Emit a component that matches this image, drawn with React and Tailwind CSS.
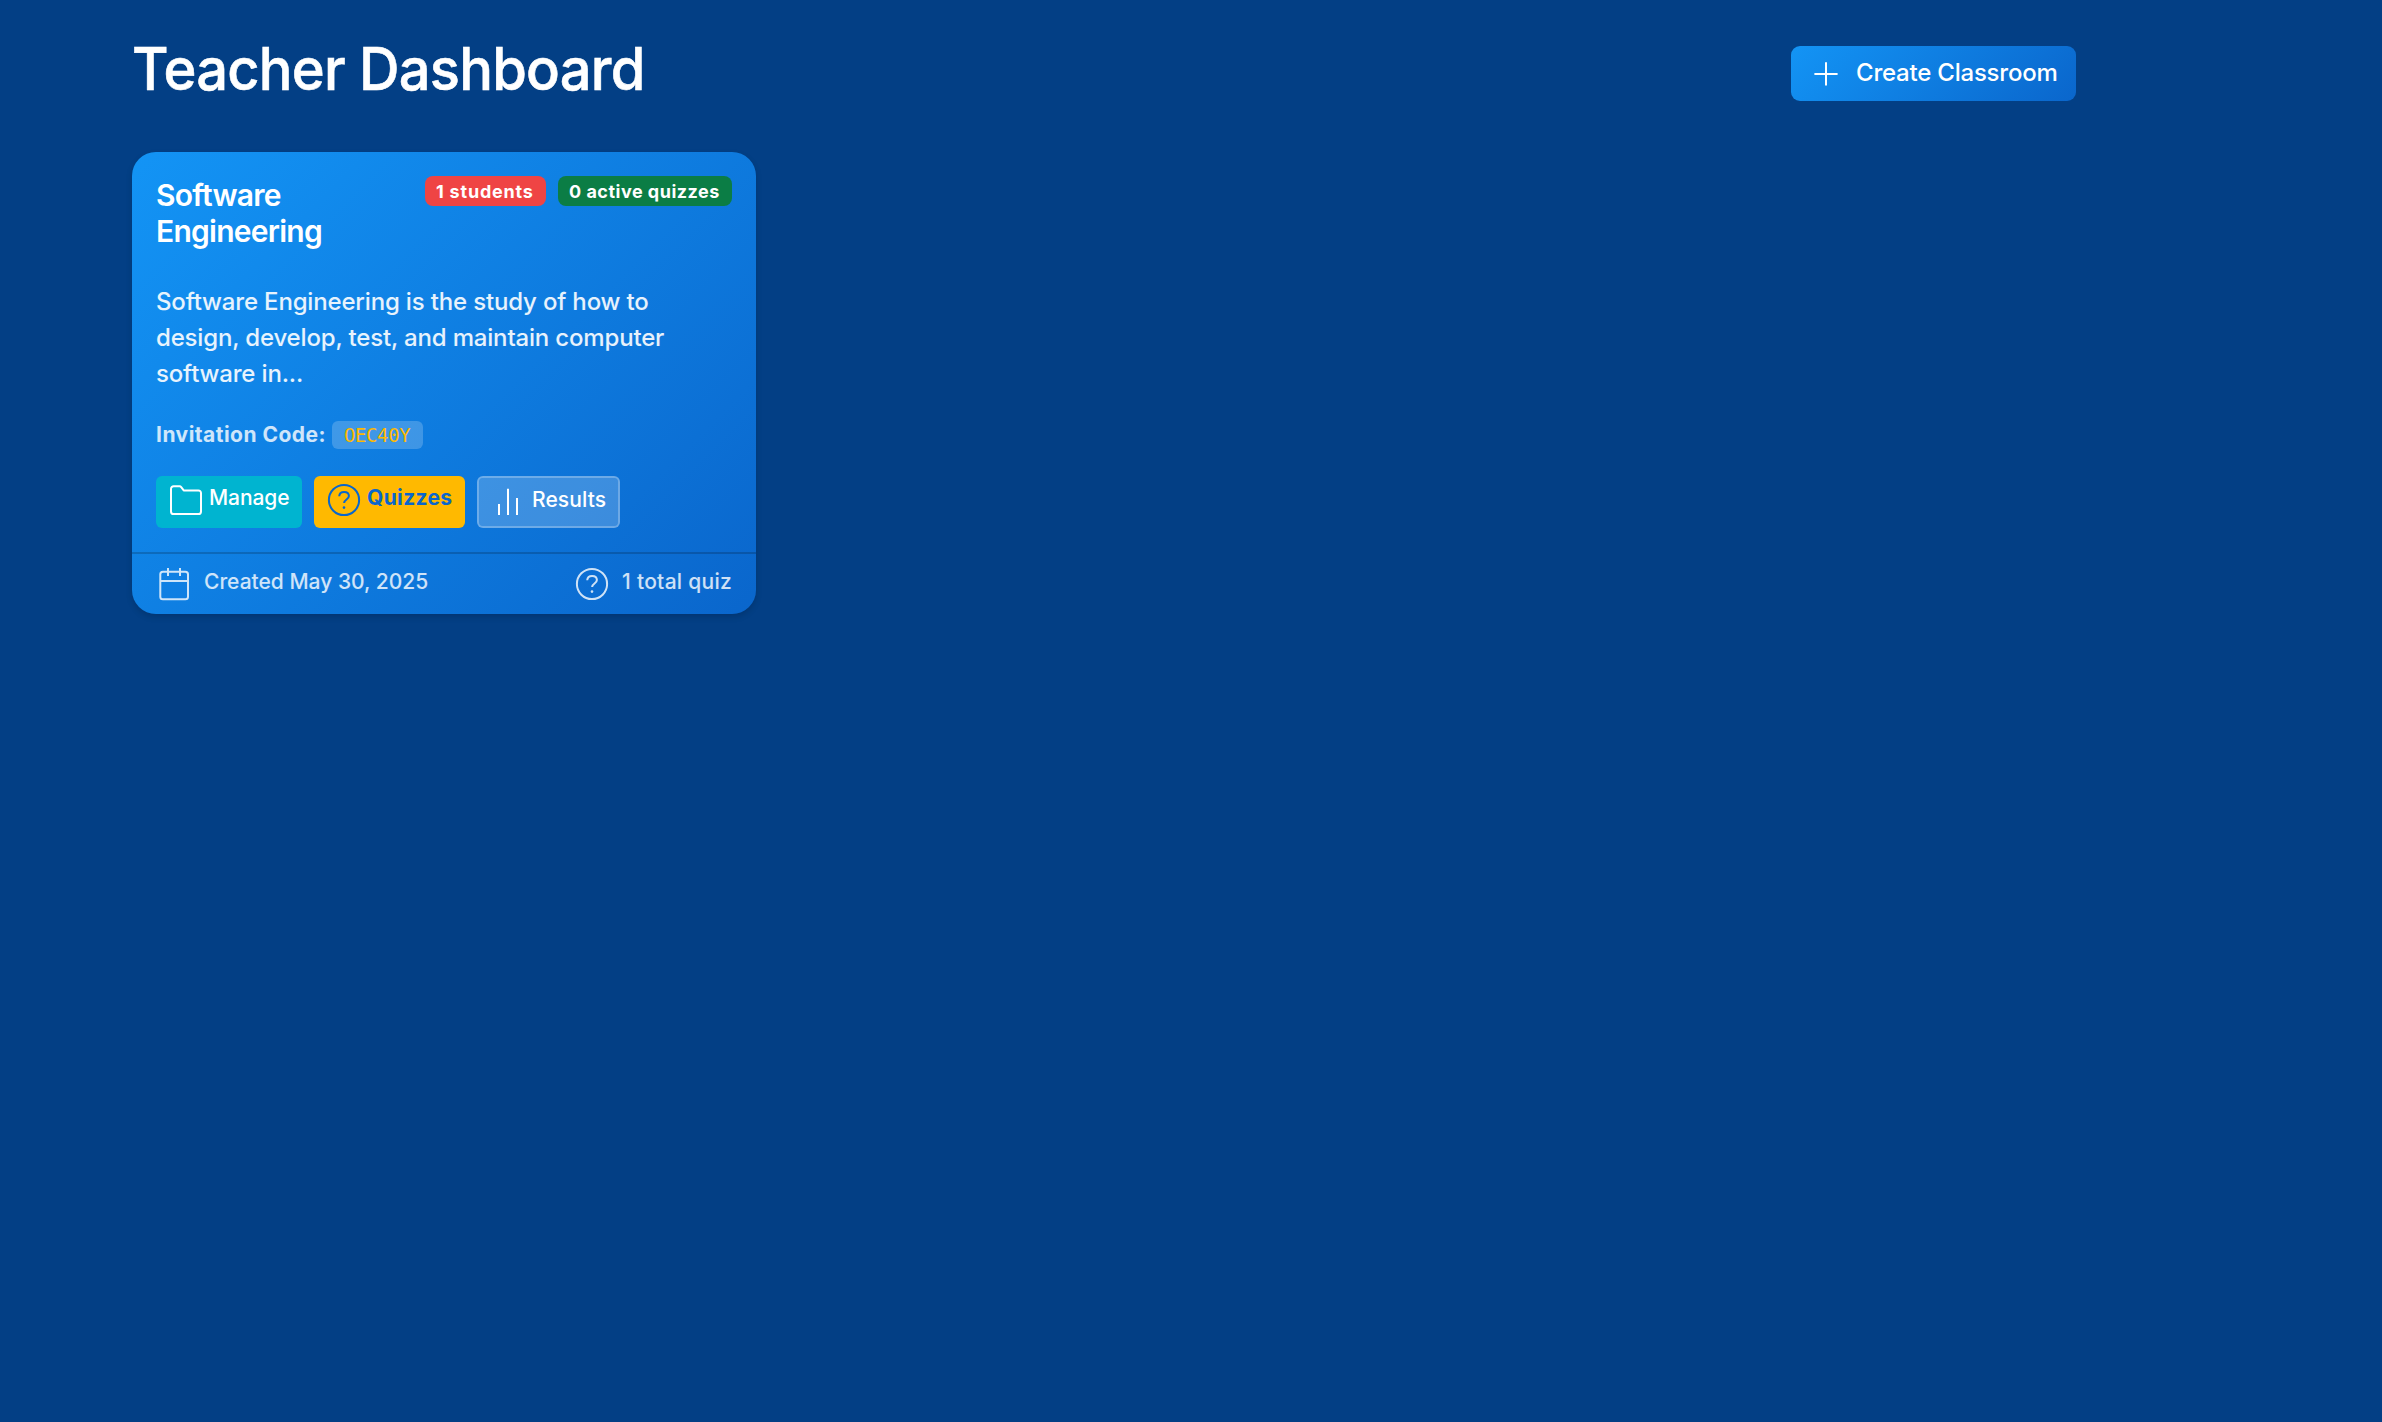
function Icon({ name, className = "" }) {
  return (
    <svg
      viewBox="0 0 36 36"
      fill="none"
      stroke="currentColor"
      strokeWidth="2"
      strokeLinejoin="round"
      className={"h-9 w-9 shrink-0 " + className}
    >
      {name === "plus" && <path d="M18 6.3v23.200M6.400 18h23.200" />}
      {name === "folder" && (
        <path d="M3 6.900a2.600 2.600 0 0 1 2.600-2.600h6c.6 0 1.200.3 1.600.8l2.500 3.300h14.700A2.600 2.600 0 0 1 33 11v18.400a2.600 2.600 0 0 1-2.600 2.600H5.600A2.600 2.600 0 0 1 3 29.400z" />
      )}
      {name === "help" && (
        <>
          <circle cx="18" cy="18" r="15.100" />
          <path d="M13.200 14.200c.2-2.700 2.200-4.300 4.900-4.300s4.800 1.600 4.800 4.200c0 3.600-4.800 3.300-4.800 7" />
          <circle cx="18" cy="25.600" r="1.300" fill="currentColor" stroke="none" />
        </>
      )}
      {name === "bars" && <path d="M9 31V20M18 31V4.700M27 31V14" />}
      {name === "calendar" && (
        <path d="M6.900 5.700h22.500A2.600 2.600 0 0 1 32 8.300v22.400a2.600 2.600 0 0 1-2.600 2.600H6.900a2.600 2.600 0 0 1-2.600-2.600V8.300a2.600 2.600 0 0 1 2.600-2.600zM4.300 15H32M12 2v8M24 2v8" />
      )}
    </svg>
  );
}

function ClassroomCard() {
  return (
    <article className="mt-[47px] h-[462px] w-[624px] overflow-hidden rounded-[24px] bg-[linear-gradient(135deg,#1394f5_0%,#0a66cc_100%)] shadow-[0_3px_6px_rgba(0,0,0,0.15)]">
      <div className="flex h-[400px] flex-col px-6 pt-6">
        <div className="flex justify-between">
          <h2 className="mt-px text-[30px] leading-9 font-semibold tracking-[-0.75px]">
            Software
            <br />
            Engineering
          </h2>
          <div className="flex gap-3 text-[18px] leading-[31px] font-bold whitespace-nowrap">
            <span className="h-[30px] w-[121px] rounded-[8px] bg-[#ef4444] pl-[11px] tracking-[0.8px]">1 students</span>
            <span className="h-[30px] w-[174px] rounded-[8px] bg-[#0b7d45] pl-[11px] tracking-[0.5px]">0 active quizzes</span>
          </div>
        </div>
        <p className="mt-[35px] text-[24px] leading-9 font-medium tracking-[-0.17px] whitespace-nowrap text-white/90">
          Software Engineering is the study of how to
          <br />
          design, develop, test, and maintain computer
          <br />
          software in...
        </p>
        <div className="mt-[26px] flex h-8 items-start text-[21px] leading-[33px] text-white/80">
          <strong className="w-[176px] font-bold tracking-[0.48px] whitespace-nowrap">Invitation Code:</strong>
          <code className="mt-[3px] h-7 w-[91px] rounded-[6px] bg-white/20 pl-3 font-['DejaVu_Sans_Mono',monospace] text-[19px] leading-[28px] tracking-[-0.4px] text-[#ffb900]">
            OEC40Y
          </code>
        </div>
        <div className="mt-[26px] flex h-[52px] gap-3 text-[21px] leading-8 font-medium">
          <button className="flex w-[146px] items-start gap-[5px] rounded-[6px] bg-[#00b4d0] px-3 pt-[6px]">
            <Icon name="folder" />
            <span className="tracking-[-0.1px]">Manage</span>
          </button>
          <button className="flex w-[151px] items-start gap-[5px] rounded-[6px] bg-[#ffb900] px-3 pt-[6px] font-bold text-[#0a66cc]">
            <Icon name="help" />
            <span className="tracking-[0.35px]">Quizzes</span>
          </button>
          <button className="flex w-[143px] items-start gap-[6px] rounded-[6px] border-2 border-white/40 bg-white/20 bg-clip-padding pt-[6px] pl-[11px]">
            <Icon name="bars" />
            <span className="tracking-[0.1px]">Results</span>
          </button>
        </div>
      </div>
      <footer className="flex h-[62px] items-center justify-between border-t-2 border-black/18 px-6 text-[21px] font-medium text-white/80">
        <div className="flex items-center gap-3">
          <Icon name="calendar" />
          <span className="mb-1">Created May 30, 2025</span>
        </div>
        <div className="flex items-center gap-3">
          <Icon name="help" />
          <span className="mb-1 tracking-[0.27px]">1 total quiz</span>
        </div>
      </footer>
    </article>
  );
}

export default function App() {
  return (
    <div className="min-h-[1422px] bg-[#033f85] font-['Inter',sans-serif] text-white">
      <main className="ml-[132px] w-[1944px] pt-[33px]">
        <header className="flex h-[72px] items-start justify-between">
          <h1 className="origin-left scale-x-95 text-[59px] leading-[72px] font-medium tracking-[-0.8px] whitespace-nowrap [-webkit-text-stroke:0.6px_white]">
            Teacher Dashboard
          </h1>
          <button className="mt-[13px] flex h-[55px] w-[285px] items-center gap-3 rounded-[9px] bg-[linear-gradient(135deg,#1394f5_0%,#0a66cc_100%)] pl-[17px] text-[24px] font-medium">
            <Icon name="plus" />
            <span className="mb-[2px] tracking-[-0.22px] whitespace-nowrap">Create Classroom</span>
          </button>
        </header>
        <ClassroomCard />
      </main>
    </div>
  );
}
